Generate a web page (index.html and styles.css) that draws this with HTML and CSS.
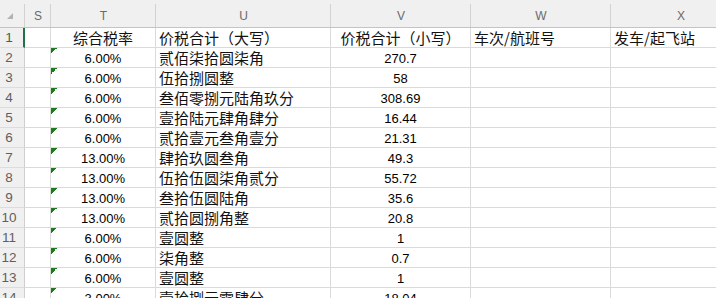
FILE: index.html
```html
<!DOCTYPE html>
<html lang="zh-CN">
<head>
<meta charset="utf-8">
<title>Sheet</title>
<link rel="stylesheet" href="styles.css">
</head>
<body>
<div class="sheet">
  <div class="ch corner"><span class="corner-tri"></span></div>
  <div class="ch">S</div>
  <div class="ch">T</div>
  <div class="ch">U</div>
  <div class="ch">V</div>
  <div class="ch">W</div>
  <div class="ch">X</div>

  <div class="rh active">1</div>
  <div class="c"></div>
  <div class="c cjk center">综合税率</div>
  <div class="c cjk">价税合计（大写）</div>
  <div class="c cjk center">价税合计（小写）</div>
  <div class="c cjk">车次/航班号</div>
  <div class="c cjk">发车/起飞站</div>

  <div class="rh">2</div><div class="c"></div><div class="c num center flag">6.00%</div><div class="c cjk">贰佰柒拾圆柒角</div><div class="c num center">270.7</div><div class="c"></div><div class="c"></div>
  <div class="rh">3</div><div class="c"></div><div class="c num center flag">6.00%</div><div class="c cjk">伍拾捌圆整</div><div class="c num center">58</div><div class="c"></div><div class="c"></div>
  <div class="rh">4</div><div class="c"></div><div class="c num center flag">6.00%</div><div class="c cjk">叁佰零捌元陆角玖分</div><div class="c num center">308.69</div><div class="c"></div><div class="c"></div>
  <div class="rh">5</div><div class="c"></div><div class="c num center flag">6.00%</div><div class="c cjk">壹拾陆元肆角肆分</div><div class="c num center">16.44</div><div class="c"></div><div class="c"></div>
  <div class="rh">6</div><div class="c"></div><div class="c num center flag">6.00%</div><div class="c cjk">贰拾壹元叁角壹分</div><div class="c num center">21.31</div><div class="c"></div><div class="c"></div>
  <div class="rh">7</div><div class="c"></div><div class="c num center flag">13.00%</div><div class="c cjk">肆拾玖圆叁角</div><div class="c num center">49.3</div><div class="c"></div><div class="c"></div>
  <div class="rh">8</div><div class="c"></div><div class="c num center flag">13.00%</div><div class="c cjk">伍拾伍圆柒角贰分</div><div class="c num center">55.72</div><div class="c"></div><div class="c"></div>
  <div class="rh">9</div><div class="c"></div><div class="c num center flag">13.00%</div><div class="c cjk">叁拾伍圆陆角</div><div class="c num center">35.6</div><div class="c"></div><div class="c"></div>
  <div class="rh">10</div><div class="c"></div><div class="c num center flag">13.00%</div><div class="c cjk">贰拾圆捌角整</div><div class="c num center">20.8</div><div class="c"></div><div class="c"></div>
  <div class="rh">11</div><div class="c"></div><div class="c num center flag">6.00%</div><div class="c cjk">壹圆整</div><div class="c num center">1</div><div class="c"></div><div class="c"></div>
  <div class="rh">12</div><div class="c"></div><div class="c num center flag">6.00%</div><div class="c cjk">柒角整</div><div class="c num center">0.7</div><div class="c"></div><div class="c"></div>
  <div class="rh">13</div><div class="c"></div><div class="c num center flag">6.00%</div><div class="c cjk">壹圆整</div><div class="c num center">1</div><div class="c"></div><div class="c"></div>
  <div class="rh">14</div><div class="c"></div><div class="c num center flag">3.00%</div><div class="c cjk">壹拾捌元零肆分</div><div class="c num center">18.04</div><div class="c"></div><div class="c"></div>
</div>
</body>
</html>
```

FILE: styles.css
```css
html, body {
  margin: 0;
  padding: 0;
  background: #ffffff;
  overflow: hidden;
}

.sheet {
  display: grid;
  grid-template-columns: 25px 26px 105px 175px 140px 140px 140px;
  grid-template-rows: 28px repeat(14, 20px);
  width: 751px;
  font-family: "Noto Sans CJK SC", sans-serif;
}

.ch {
  box-sizing: border-box;
  background-color: #f0f0f0;
  background-image: linear-gradient(#d2d2d2, #d2d2d2);
  background-repeat: no-repeat;
  background-position: right 4px;
  background-size: 1px calc(100% - 4px);
  border-bottom: 1px solid #c4c4c4;
  color: #6a6a6a;
  font-family: "Liberation Sans", sans-serif;
  font-size: 12px;
  display: flex;
  align-items: center;
  justify-content: center;
  padding-top: 4px;
}

.corner {
  justify-content: flex-start;
  align-items: flex-start;
  padding: 13px 0 0 7px;
}

.corner-tri {
  width: 0;
  height: 0;
  border-left: 6px solid transparent;
  border-bottom: 6px solid #b3b3b3;
}

.rh {
  box-sizing: border-box;
  background: #f0f0f0;
  border-right: 1px solid #cfcfcf;
  border-bottom: 1px solid #dcdcdc;
  color: #5f5f5f;
  font-family: "Liberation Sans", sans-serif;
  font-size: 13.5px;
  line-height: 19px;
  text-align: center;
  padding-right: 6px;
}

.rh.active {
  color: #217346;
  border-right: 2px solid #217346;
  padding-right: 5px;
}

.c {
  box-sizing: border-box;
  border-right: 1px solid #dadada;
  border-bottom: 1px solid #dadada;
  padding: 0 3px;
  white-space: nowrap;
  overflow: hidden;
  color: #111111;
  line-height: 19px;
}

.cjk {
  font-family: "Noto Sans CJK SC", sans-serif;
  font-size: 15px;
  line-height: 20px;
}

.num {
  font-family: "Liberation Sans", sans-serif;
  font-size: 13px;
  line-height: 21px;
  color: #000000;
}

.center {
  text-align: center;
}

.flag {
  background-image: linear-gradient(135deg, #1d7a1d 50%, transparent 50%);
  background-repeat: no-repeat;
  background-size: 6px 6px;
  background-position: left top;
}
```
